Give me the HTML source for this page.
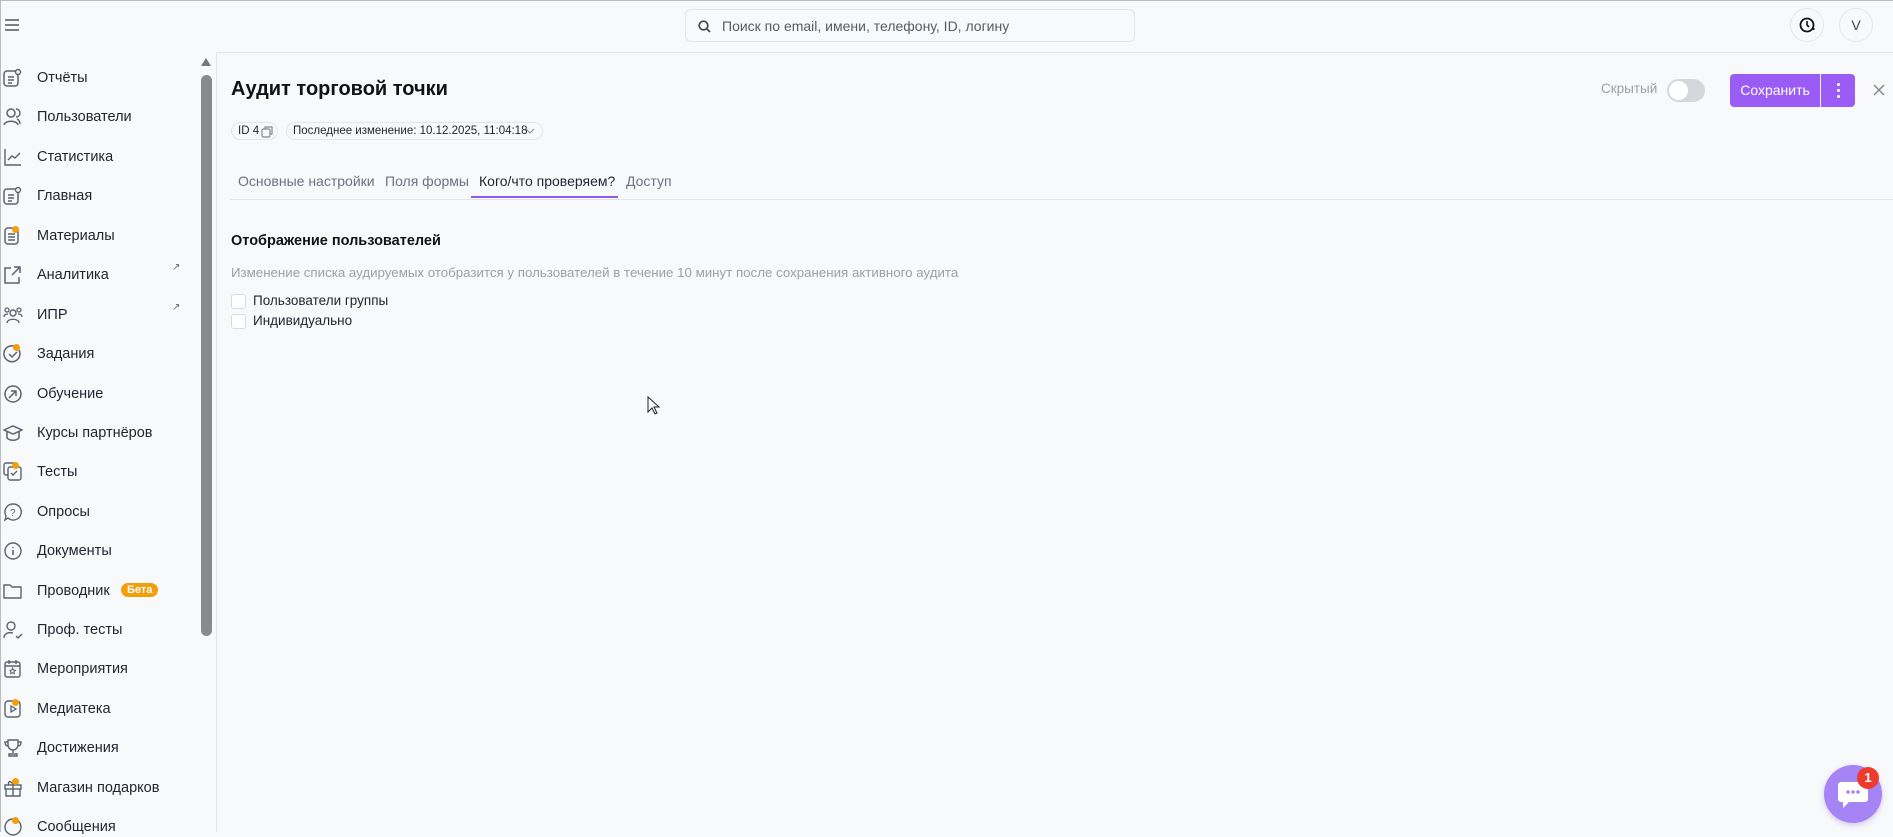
<!DOCTYPE html>
<html><head><meta charset="utf-8"><style>
*{box-sizing:border-box;margin:0;padding:0}
body{width:1893px;height:832px;overflow:hidden;background:#f8f9fb;font-family:"Liberation Sans",sans-serif;color:#1f2430;position:relative}
.abs{position:absolute}
.top{left:0;top:0;width:1893px;height:1px;background:#b8bcc2}
.lb{left:0;top:0;width:1px;height:832px;background:#b8bcc2}
.hline{left:216px;top:52px;width:1677px;height:1px;background:#e3e6ea}
.sbline{left:216px;top:52px;width:1px;height:780px;background:#e3e6ea}
.search{left:685px;top:9px;width:450px;height:33px;border:1px solid #e2e5e9;border-radius:6px;background:#f8f9fb}
.search span{position:absolute;left:36px;top:8px;font-size:14px;color:#555c66}
.circ{width:34px;height:34px;border:1px solid #e4e7eb;border-radius:50%;background:#f8f9fb;display:flex;align-items:center;justify-content:center}
.item{left:0;height:20px;width:200px;font-size:14.5px;color:#1f2430}
.item svg{position:absolute;left:3px;top:0}
.item span{position:absolute;left:37px;top:2px}
.dot{position:absolute;width:7px;height:7px;border-radius:50%;background:#f59e0b}
.chip{height:18px;border:1px solid #e2e5e9;border-radius:9px;font-size:11.5px;padding:2px 6px;color:#1f2430;white-space:nowrap}
.tab{top:173px;font-size:14px;color:#6b7280;white-space:nowrap}
.cb{width:15px;height:15px;border:1px solid #d8dbe0;border-radius:3px;background:#fff}
</style></head><body>
<div class="abs top"></div><div class="abs lb"></div>
<div class="abs hline"></div><div class="abs sbline"></div>
<svg class="abs" style="left:4px;top:18px" width="16" height="14"><path d="M1 2h14M1 7h14M1 12h14" stroke="#555" stroke-width="1.5"/></svg>
<div class="abs search"><svg class="abs" style="left:12px;top:10px" width="13" height="13"><circle cx="5.5" cy="5.5" r="4.3" stroke="#444" stroke-width="1.7" fill="none"/><path d="M9 9l3 3" stroke="#444" stroke-width="1.7"/></svg><span>Поиск по email, имени, телефону, ID, логину</span></div>
<div class="abs circ" style="left:1790px;top:8px"><svg width="18" height="18"><circle cx="9" cy="9" r="6.5" stroke="#111" stroke-width="1.8" fill="none"/><path d="M9 5v4l2 2" stroke="#111" stroke-width="1.6" fill="none"/><path d="M14 12l2.5 1.5" stroke="#111" stroke-width="1.8"/></svg></div>
<div class="abs circ" style="left:1839px;top:8px;font-size:14px;color:#444">V</div>
<svg class="abs" style="left:200px;top:57px" width="12" height="10"><path d="M6 1L11 9H1z" fill="#777"/></svg>
<div class="abs" style="left:201px;top:75px;width:11px;height:561px;border-radius:6px;background:#8a8a8a"></div>
<div class="abs item" style="top:68px"><svg width="20" height="20"><rect x="1" y="3" width="14" height="15" rx="3" fill="none" stroke="#5b6370" stroke-width="1.5"/><path d="M5 9h6M5 12h6M5 15h4" stroke="#5b6370" stroke-width="1.4"/><circle cx="15" cy="4" r="2.5" fill="#f8f9fb" stroke="#5b6370" stroke-width="1.4"/></svg><span>Отчёты</span></div>
<div class="abs item" style="top:107px"><svg width="20" height="20"><circle cx="8" cy="6" r="4" fill="none" stroke="#5b6370" stroke-width="1.5"/><path d="M1 18c1-5 13-5 14 0M13 2a4 4 0 010 8M17 17c0-2-1-4-3-5" fill="none" stroke="#5b6370" stroke-width="1.4"/></svg><span>Пользователи</span></div>
<div class="abs item" style="top:147px"><svg width="20" height="20"><path d="M2 2v16h16M5 13l4-4 3 2 5-5" fill="none" stroke="#5b6370" stroke-width="1.4"/></svg><span>Статистика</span></div>
<div class="abs item" style="top:186px"><svg width="20" height="20"><rect x="1" y="3" width="14" height="15" rx="3" fill="none" stroke="#5b6370" stroke-width="1.5"/><path d="M5 9h6M5 12h6M5 15h4" stroke="#5b6370" stroke-width="1.4"/><circle cx="15" cy="4" r="2.5" fill="#f8f9fb" stroke="#5b6370" stroke-width="1.4"/></svg><span>Главная</span></div>
<div class="abs item" style="top:226px"><svg width="20" height="20"><rect x="2" y="2" width="13" height="16" rx="3" fill="none" stroke="#5b6370" stroke-width="1.5"/><path d="M5 8h7M5 11h7M5 14h7" stroke="#5b6370" stroke-width="1.4"/></svg><i class="dot" style="left:12px;top:0"></i><span>Материалы</span></div>
<div class="abs item" style="top:265px"><svg width="20" height="20"><path d="M8 3H2v15h14v-6M11 2h6v6M17 2l-8 8" fill="none" stroke="#5b6370" stroke-width="1.5"/></svg><span>Аналитика</span><i style="position:absolute;left:172px;top:-3px;font-size:10px;font-style:normal;color:#666">↗</i></div>
<div class="abs item" style="top:305px"><svg width="20" height="20"><circle cx="10" cy="8" r="3" fill="none" stroke="#5b6370" stroke-width="1.4"/><circle cx="4" cy="5" r="2" fill="none" stroke="#5b6370" stroke-width="1.3"/><circle cx="16" cy="5" r="2" fill="none" stroke="#5b6370" stroke-width="1.3"/><path d="M4 18c0-5 12-5 12 0M1 12c0-3 3-3 4-3M19 12c0-3-3-3-4-3" fill="none" stroke="#5b6370" stroke-width="1.3"/></svg><span>ИПР</span><i style="position:absolute;left:172px;top:-3px;font-size:10px;font-style:normal;color:#666">↗</i></div>
<div class="abs item" style="top:344px"><svg width="20" height="20"><path d="M16 6A8 8 0 1 1 11 2" fill="none" stroke="#5b6370" stroke-width="1.5"/><path d="M6 10l3 3 5-5" fill="none" stroke="#5b6370" stroke-width="1.5"/></svg><i class="dot" style="left:13px;top:0"></i><span>Задания</span></div>
<div class="abs item" style="top:384px"><svg width="20" height="20"><circle cx="10" cy="10" r="8" fill="none" stroke="#5b6370" stroke-width="1.5"/><path d="M6 14l7-7M8 7h5v5" fill="none" stroke="#5b6370" stroke-width="1.5"/></svg><span>Обучение</span></div>
<div class="abs item" style="top:423px"><svg width="20" height="20"><path d="M1 7l9-4 9 4-9 4zM4 9v6c3 3 9 3 12 0V9" fill="none" stroke="#5b6370" stroke-width="1.5"/></svg><span>Курсы партнёров</span></div>
<div class="abs item" style="top:462px"><svg width="20" height="20"><rect x="1" y="1" width="12" height="12" rx="2" fill="none" stroke="#5b6370" stroke-width="1.4"/><rect x="5" y="5" width="13" height="13" rx="2" fill="#f8f9fb" stroke="#5b6370" stroke-width="1.4"/><path d="M8 11l2 2 4-4" fill="none" stroke="#5b6370" stroke-width="1.4"/></svg><i class="dot" style="left:12px;top:0"></i><span>Тесты</span></div>
<div class="abs item" style="top:502px"><svg width="20" height="20"><path d="M10 2a8 8 0 1 1-5 14L2 18l1-4A8 8 0 0 1 10 2z" fill="none" stroke="#5b6370" stroke-width="1.4"/><text x="7" y="14" font-size="10" fill="#5b6370" font-family="Liberation Sans">?</text></svg><span>Опросы</span></div>
<div class="abs item" style="top:541px"><svg width="20" height="20"><circle cx="10" cy="10" r="8" fill="none" stroke="#5b6370" stroke-width="1.4"/><path d="M10 9v5M10 6v1" stroke="#5b6370" stroke-width="1.6"/></svg><span>Документы</span></div>
<div class="abs item" style="top:581px"><svg width="20" height="20"><path d="M1 4h6l2 2h9v11H1z" fill="none" stroke="#5b6370" stroke-width="1.4" stroke-linejoin="round"/></svg><span>Проводник</span><b style="position:absolute;left:121px;top:2px;background:#f59e0b;color:#fff;font-size:11px;border-radius:8px;padding:1px 6px">Бета</b></div>
<div class="abs item" style="top:620px"><svg width="20" height="20"><circle cx="8" cy="6" r="4" fill="none" stroke="#5b6370" stroke-width="1.4"/><path d="M1 18c0-5 5-6 9-5M13 16l2 2 4-4" fill="none" stroke="#5b6370" stroke-width="1.4"/></svg><span>Проф. тесты</span></div>
<div class="abs item" style="top:659px"><svg width="20" height="20"><rect x="2" y="3" width="15" height="15" rx="2" fill="none" stroke="#5b6370" stroke-width="1.4"/><path d="M6 1v4M13 1v4M2 7h15" stroke="#5b6370" stroke-width="1.4"/><path d="M9.5 9l1 2 2 .3-1.5 1.4.4 2-1.9-1-1.9 1 .4-2L7 11.3l2-.3z" fill="none" stroke="#5b6370"/></svg><span>Мероприятия</span></div>
<div class="abs item" style="top:699px"><svg width="20" height="20"><rect x="2" y="2" width="15" height="16" rx="3" fill="none" stroke="#5b6370" stroke-width="1.4"/><path d="M8 7v6l5-3z" fill="none" stroke="#5b6370" stroke-width="1.3"/></svg><i class="dot" style="left:12px;top:0"></i><span>Медиатека</span></div>
<div class="abs item" style="top:738px"><svg width="20" height="20"><path d="M5 2h10v5a5 5 0 0 1-10 0zM5 4H2c0 3 1 4 3 4M15 4h3c0 3-1 4-3 4M10 12v3M6 18h8v-2H6z" fill="none" stroke="#5b6370" stroke-width="1.4"/></svg><span>Достижения</span></div>
<div class="abs item" style="top:778px"><svg width="20" height="20"><rect x="2" y="7" width="16" height="4" fill="none" stroke="#5b6370" stroke-width="1.4"/><path d="M3 11v7h14v-7M10 7v11M10 7c-2-5-6-4-4 0M10 7c2-5 6-4 4 0" fill="none" stroke="#5b6370" stroke-width="1.4"/></svg><i class="dot" style="left:12px;top:0"></i><span>Магазин подарков</span></div>
<div class="abs item" style="top:817px"><svg width="20" height="20"><circle cx="10" cy="10" r="8" fill="none" stroke="#5b6370" stroke-width="1.4"/></svg><i class="dot" style="left:12px;top:0"></i><span>Сообщения</span></div>
<div class="abs" style="left:231px;top:78px;font-size:20px;font-weight:bold;color:#111">Аудит торговой точки</div>
<div class="abs chip" style="left:231px;top:122px;width:47px">ID 4<svg style="position:absolute;left:29px;top:3px" width="12" height="12"><rect x="1" y="3" width="8" height="8" rx="1.5" fill="none" stroke="#888" stroke-width="1.2"/><path d="M4 3V1h7v7H9" fill="none" stroke="#888" stroke-width="1.2"/></svg></div>
<div class="abs chip" style="left:286px;top:122px;width:257px">Последнее изменение: 10.12.2025, 11:04:18<svg style="position:absolute;left:238px;top:5px" width="10" height="7"><path d="M1 1l4 4 4-4" fill="none" stroke="#888"/></svg></div>
<div class="abs tab" style="left:238px">Основные настройки</div>
<div class="abs tab" style="left:385px">Поля формы</div>
<div class="abs tab" style="left:479px;color:#1f2430">Кого/что проверяем?</div>
<div class="abs tab" style="left:626px">Доступ</div>
<div class="abs" style="left:230px;top:199px;width:1663px;height:1px;background:#e2e5e9"></div>
<div class="abs" style="left:471px;top:196px;width:147px;height:2px;background:#8b5cf6"></div>
<div class="abs" style="left:231px;top:233px;font-size:14.5px;font-weight:bold;color:#111">Отображение пользователей</div>
<div class="abs" style="left:231px;top:265px;font-size:13.3px;color:#9aa0a8;white-space:nowrap">Изменение списка аудируемых отобразится у пользователей в течение 10 минут после сохранения активного аудита</div>
<div class="abs cb" style="left:231px;top:294px"></div><div class="abs" style="left:253px;top:293px;font-size:13.5px">Пользователи группы</div>
<div class="abs cb" style="left:231px;top:314px"></div><div class="abs" style="left:253px;top:313px;font-size:13.5px">Индивидуально</div>
<div class="abs" style="left:1601px;top:81px;font-size:13.5px;color:#9aa0a8">Скрытый</div>
<div class="abs" style="left:1667px;top:79px;width:38px;height:23px;border-radius:12px;background:#d5d7dc"><div style="position:absolute;left:2px;top:2px;width:19px;height:19px;border-radius:50%;background:#fff"></div></div>
<div class="abs" style="left:1730px;top:74px;width:90px;height:33px;background:#9b5cf6;border-radius:4px 0 0 4px;color:#fff;font-size:14px;text-align:center;line-height:33px">Сохранить</div>
<div class="abs" style="left:1821px;top:74px;width:34px;height:33px;background:#9b5cf6;border-radius:0 4px 4px 0"><i style="position:absolute;left:16px;top:9px;width:3px;height:3px;background:#fff;border-radius:50%"></i><i style="position:absolute;left:16px;top:15px;width:3px;height:3px;background:#fff;border-radius:50%"></i><i style="position:absolute;left:16px;top:21px;width:3px;height:3px;background:#fff;border-radius:50%"></i></div>
<svg class="abs" style="left:1872px;top:83px" width="14" height="14"><path d="M2 2l10 10M12 2L2 12" stroke="#888" stroke-width="1.5"/></svg>
<svg class="abs" style="left:647px;top:396px" width="14" height="20"><path d="M1 1v15l4-4 3 6 2-1-3-6h5z" fill="#fff" stroke="#222"/></svg>
<div class="abs" style="left:1824px;top:765px;width:58px;height:58px;border-radius:50%;background:#a684f5;box-shadow:0 2px 6px rgba(120,90,200,.3)"></div>
<svg class="abs" style="left:1837px;top:780px" width="32" height="30"><path d="M4 2h24a3 3 0 0 1 3 3v14a3 3 0 0 1-3 3H12l-6 6v-6H4a3 3 0 0 1-3-3V5a3 3 0 0 1 3-3z" fill="#fff"/><circle cx="11" cy="12" r="1.8" fill="#a684f5"/><circle cx="16" cy="12" r="1.8" fill="#a684f5"/><circle cx="21" cy="12" r="1.8" fill="#a684f5"/></svg>
<div class="abs" style="left:1857px;top:767px;width:22px;height:22px;border-radius:50%;background:#ef3b2d;color:#fff;font-size:13px;font-weight:bold;text-align:center;line-height:22px">1</div>
</body></html>
